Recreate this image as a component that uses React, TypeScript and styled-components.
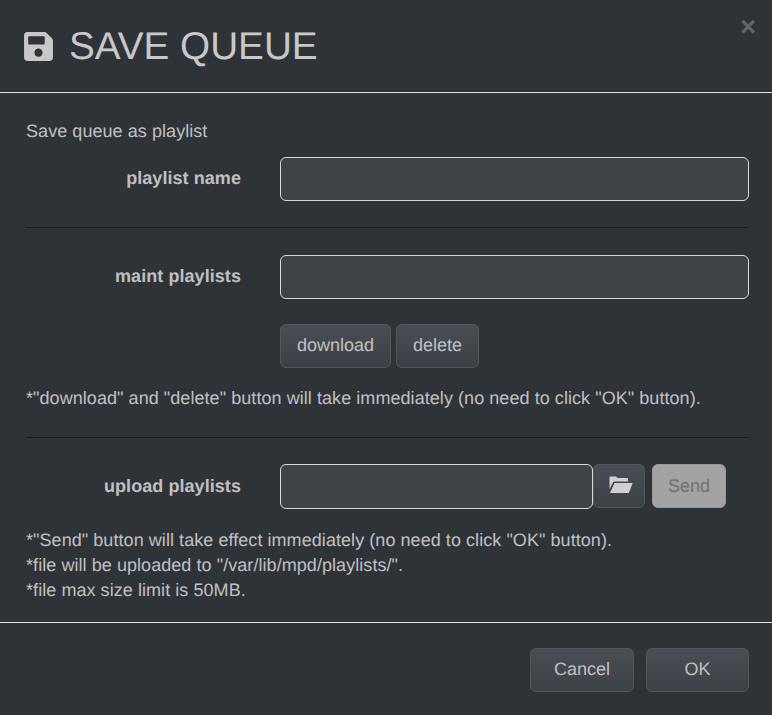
import React from "react"
import styled, { createGlobalStyle } from "styled-components"
import { FaSave } from "react-icons/fa"

const GlobalStyle = createGlobalStyle`
  html, body {
    margin: 0;
    padding: 0;
    background: #2e3338;
  }
  * {
    box-sizing: border-box;
  }
`

const Modal = styled.div`
  width: 772px;
  height: 715px;
  background: #2e3338;
  color: #c0c0c0;
  font-family: "Liberation Sans", Arial, sans-serif;
  font-size: 18px;
  line-height: 25px;
  letter-spacing: 0.06px;
  text-rendering: geometricPrecision;
  position: relative;
  overflow: hidden;`

const Header = styled.div`
  height: 93px;
  border-bottom: 1px solid #e6e6e6;
  padding: 25px 24px 0;
  display: flex;
  align-items: flex-start;
  gap: 16px;`

const Title = styled.h4`
  margin: 0;
  font-size: 38.7px;
  font-weight: 400;
  line-height: 44px;
  letter-spacing: 0;
  color: #c8c8c8;`

const SaveIcon = styled(FaSave)`
  width: 29px;
  height: 33px;
  margin-top: 5px;
  color: #c8c8c8;`

const Close = styled.button`
  position: absolute;
  top: 14px;
  right: 16px;
  padding: 0;
  border: none;
  background: none;
  font-family: inherit;
  font-size: 27px;
  line-height: 27px;
  font-weight: 700;
  color: #63676b;`

const Body = styled.div`
  height: 530px;
  border-bottom: 1px solid #e6e6e6;
  padding: 26px 23px 0 26px;`

const Row = styled.div`
  display: flex;
  align-items: flex-start;`

const Label = styled.label`
  width: 215px;
  margin-right: 39px;
  padding-bottom: 1px;
  align-self: center;
  text-align: right;
  font-weight: 700;`

const Input = styled.div<{ $w: number; $h?: number }>`
  width: ${p => p.$w}px;
  height: ${p => p.$h ?? 44}px;
  background: #3e4348;
  border: 1px solid #d8d8d8;
  border-radius: 6px;`

const Intro = styled.p`
  margin: 0 0 13px;`

const Rule = styled.hr<{ $below: number }>`
  margin: 26px 0 ${p => p.$below}px;
  border: none;
  border-top: 1px solid #1c1e22;`

const Btn = styled.button`
  height: 44px;
  padding: 0 16px 2px;
  font-family: inherit;
  font-size: 18px;
  letter-spacing: 0;
  text-rendering: inherit;
  color: #c0c0c0;
  background: linear-gradient(#484e55, #41464c 60%, #3c4147);
  border: 1px solid #52575c;
  border-radius: 6px;
  display: flex;
  align-items: center;
  justify-content: center;`

const Actions = styled.div`
  display: flex;
  gap: 5px;
  margin: 25px 0 0 254px;`

const Note = styled.p<{ $mt: number }>`
  margin: ${p => p.$mt}px 0 0;`

const FileBtn = styled(Btn)`
  width: 52px;
  padding: 0 0 2px 3px;`

const SendBtn = styled(Btn)`
  width: 74px;
  padding: 0;
  margin-left: 7px;
  background: #a3a3a3;
  color: #757575;
  text-shadow: 0 -1px 0 rgba(0, 0, 0, 0.15);
  border-color: #999;`

const FolderIcon = styled.svg`
  width: 24px;
  height: 18px;
  fill: #d0d0d0;`

const Footer = styled.div`
  display: flex;
  justify-content: flex-end;
  gap: 12px;
  padding: 25px 23px 0 0;`

const WideBtn = styled(Btn)<{ $w: number }>`
  width: ${p => p.$w}px;
  padding: 0 0 2px;`

export default function App() {
  return (
    <React.Fragment>
      <GlobalStyle />
      <Modal>
        <Close>×</Close>
        <Header>
          <SaveIcon />
          <Title>SAVE QUEUE</Title>
        </Header>
        <Body>
          <Intro>Save queue as playlist</Intro>
          <Row>
            <Label>playlist name</Label>
            <Input $w={469} />
          </Row>
          <Rule $below={27} />
          <Row>
            <Label>maint playlists</Label>
            <Input $w={469} />
          </Row>
          <Actions>
            <Btn>download</Btn>
            <Btn>delete</Btn>
          </Actions>
          <Note $mt={18}>*"download" and "delete" button will take immediately (no need to click "OK" button).</Note>
          <Rule $below={26} />
          <Row>
            <Label>upload playlists</Label>
            <Input $w={313} $h={45} />
            <FileBtn>
              <FolderIcon viewBox="0 0 24 18">
                <path d="M0.5 1.5Q0.5 .4 1.5 .4H7L8.5 2H18Q19 2 19 3V5.5H5.5Q4.5 5.5 4 6.5L0.5 13Z" />
                <path d="M5.5 7H23.7L20 16.5Q19.7 17 19 17H1Z" />
              </FolderIcon>
            </FileBtn>
            <SendBtn disabled>Send</SendBtn>
          </Row>
          <Note $mt={19}>
            *"Send" button will take effect immediately (no need to click "OK" button).<br />
            *file will be uploaded to "/var/lib/mpd/playlists/".<br />
            *file max size limit is 50MB.
          </Note>
        </Body>
        <Footer>
          <WideBtn $w={104}>Cancel</WideBtn>
          <WideBtn $w={103}>OK</WideBtn>
        </Footer>
      </Modal>
    </React.Fragment>
  )
}
